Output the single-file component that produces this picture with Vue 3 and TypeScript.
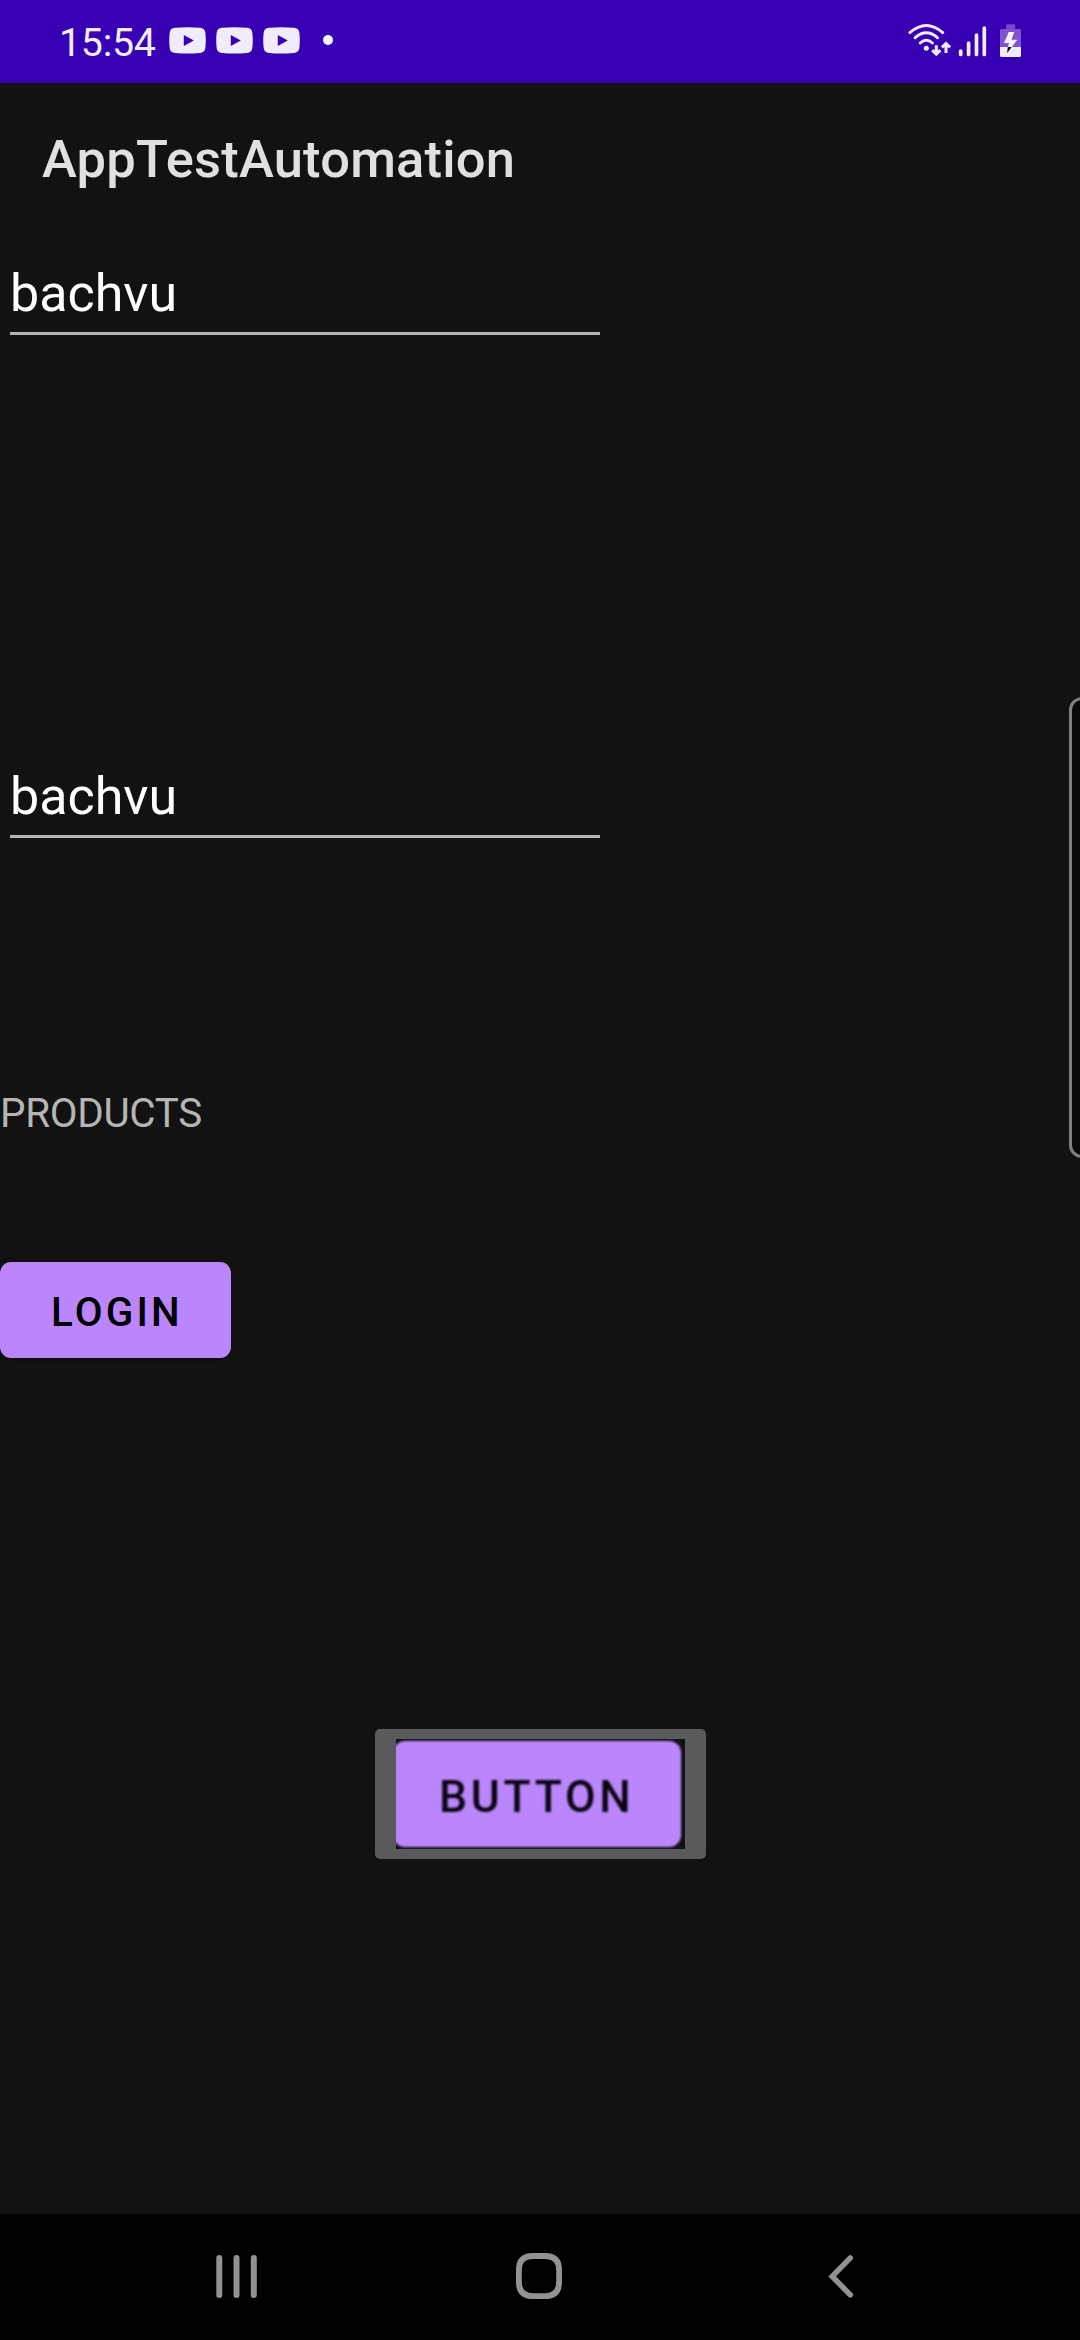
<script setup lang="ts">
import { ref } from 'vue'

const username = ref<string>('bachvu')
const password = ref<string>('bachvu')
const notifications: number[] = [1, 2, 3]
</script>

<template>
  <div class="screen">
    <header class="status">
      <span class="clock">15:54</span>
      <svg v-for="n in notifications" :key="n" class="video" viewBox="0 0 37 27">
        <path
          fill-rule="evenodd"
          d="M6 .7Q18.500 -.4 31 .7Q35.600 1 36.300 5.500Q37.300 13.300 36.300 21.300Q35.600 25.600 31 26Q18.500 27.200 6 26Q1.400 25.600 .7 21.300Q-.3 13.300 .7 5.500Q1.400 1 6 .7ZM14.800 7.900V18.900L24.800 13.400Z"
        />
      </svg>
      <span class="dot"></span>
      <svg class="system" viewBox="900 0 130 83">
        <g fill="none" stroke="#f1ecfb" stroke-width="2.900" stroke-linecap="round">
          <path d="M909.800 32.600Q926.300 18.300 942.800 32.600" />
          <path d="M915 37.800Q926.300 27.800 937.600 37.800" />
          <path d="M920.200 43Q926.300 37.400 932.400 43" />
        </g>
        <circle cx="926.300" cy="48.300" r="2.500" fill="#f1ecfb" />
        <g fill="none" stroke="#f1ecfb" stroke-width="3">
          <path d="M936.300 45.300V54M932.200 50.200L936.300 54.100L940.400 50.200" />
          <path d="M946 53V44M941.900 47.400L946 43.500L950.100 47.400" />
        </g>
        <g stroke="#f1ecfb" stroke-width="3.700" stroke-linecap="round">
          <path d="M960.700 51V54.500M968.600 43.200V54.500M976.500 35.200V54.500M984.300 28.200V54.500" />
        </g>
        <path d="M1006 25.500Q1006 24.300 1007.200 24.300H1014Q1015.200 24.300 1015.200 25.500V29H1006Z" fill="#7848cd" />
        <path d="M1000 30.500Q1000 29 1001.500 29H1019.500Q1021 29 1021 30.500V47H1000Z" fill="#7f52d0" />
        <path d="M1000 47H1021V55.500Q1021 57 1019.500 57H1001.500Q1000 57 1000 55.500Z" fill="#f1ecfb" />
        <path d="M1008.800 32H1014.300L1011.500 39.700H1017.300L1011.800 47H1008L1009 43H1004Z" fill="#f8f5ff" />
        <path d="M1007.800 47H1011.800L1007 53.200Z" fill="#111" />
      </svg>
    </header>

    <main class="content">
      <h1 class="title">AppTestAutomation</h1>
      <input v-model="username" class="field" type="text" spellcheck="false" />
      <input v-model="password" class="field second" type="text" spellcheck="false" />
      <p class="products">PRODUCTS</p>
      <button class="login" type="button">LOGIN</button>
      <button class="image-button" type="button">
        <span class="picture"><span class="face">BUTTON</span></span>
      </button>
    </main>

    <nav class="navigation">
      <svg viewBox="0 0 60 60">
        <path d="M12.300 11V48M29.500 11V48M46.800 11V48" stroke-width="6" stroke-linecap="round" />
      </svg>
      <svg viewBox="0 0 60 60">
        <path
          d="M24 9H36Q50.100 9 50.100 23V35Q50.100 49.200 36 49.200H24Q9.900 49.200 9.900 35V23Q9.900 9 24 9Z"
          stroke-width="5.800"
        />
      </svg>
      <svg viewBox="0 0 60 60">
        <path d="M40.300 10.900L22.200 29.400L40.300 47.900" stroke-width="5.500" stroke-linecap="round" />
      </svg>
    </nav>

    <div class="edge-panel"></div>
  </div>
</template>

<style>
body {
  margin: 0;
  background: #121212;
}
</style>

<style scoped>
.screen {
  position: relative;
  display: flex;
  flex-direction: column;
  box-sizing: border-box;
  width: 1080px;
  height: 2340px;
  overflow: hidden;
  background: #121212;
  font-family: Roboto, sans-serif;
}

.status {
  display: flex;
  align-items: center;
  box-sizing: border-box;
  height: 83px;
  padding-left: 59px;
  background: #3700b3;
  color: #f1ecfb;
}

.clock {
  width: 110px;
  padding-top: 2px;
  font-size: 39.400px;
  line-height: 46px;
  letter-spacing: -0.3px;
}

.video {
  width: 37px;
  height: 27px;
  margin: 0 10px 2px 0;
  fill: #f1ecfb;
}

.dot {
  width: 10px;
  height: 10px;
  margin: 0 0 3px 13px;
  border-radius: 50%;
  background: #f8f5ff;
}

.system {
  width: 130px;
  height: 83px;
  margin: 0 50px 0 auto;
}

.content {
  display: flex;
  flex: 1;
  flex-direction: column;
  align-items: flex-start;
}

.title {
  margin: 0;
  padding: 46px 0 0 42px;
  color: #e0e0e0;
  font-size: 52.500px;
  font-weight: 500;
  line-height: 60px;
  letter-spacing: 0.2px;
}

.field {
  box-sizing: border-box;
  width: 590px;
  height: 78px;
  margin: 68px 0 0 10px;
  padding: 0 0 2px;
  border: 0;
  border-bottom: 3px solid #b3b3b3;
  border-radius: 0;
  outline: 0;
  background: transparent;
  color: #fff;
  font-family: inherit;
  font-size: 52px;
}

.second {
  margin-top: 425px;
}

.products {
  margin: 252px 0 0;
  color: #b5b5b5;
  font-size: 40.400px;
  line-height: 48px;
  letter-spacing: -0.3px;
}

.login {
  width: 231px;
  height: 96px;
  margin: 124px 0 0;
  padding: 5px 0 0 51px;
  border: 0;
  border-radius: 11px;
  background: #bb86fc;
  color: #000;
  font-family: inherit;
  font-size: 40.400px;
  font-weight: 500;
  letter-spacing: 3.200px;
  text-align: left;
  box-shadow: 0 2px 6px rgba(0, 0, 0, 0.3);
}

.image-button {
  display: flex;
  box-sizing: border-box;
  width: 331px;
  height: 130px;
  margin: 371px 0 0 375px;
  padding: 10px 21px;
  border: 0;
  border-radius: 5px;
  background: #5a5a5c;
}

.picture {
  display: flex;
  box-sizing: border-box;
  width: 289px;
  height: 110px;
  padding: 2px 4px 2px 0;
  overflow: hidden;
  background: #121212;
}

.face {
  flex: 1;
  margin-left: -3px;
  padding: 4px 0 0 46px;
  border-radius: 12px;
  background: #bb86fc;
  color: #0a0410;
  font-family: Roboto, sans-serif;
  font-size: 44.400px;
  font-weight: 500;
  line-height: 104px;
  letter-spacing: 3.750px;
  text-align: left;
  filter: blur(0.8px);
}

.navigation {
  display: flex;
  justify-content: space-between;
  align-items: center;
  box-sizing: border-box;
  height: 126px;
  padding: 0 210px 0 207px;
  background: #000;
}

.navigation svg {
  width: 60px;
  height: 60px;
  fill: none;
  stroke: #929292;
}

.edge-panel {
  position: absolute;
  top: 697px;
  right: -20px;
  box-sizing: border-box;
  width: 31px;
  height: 461px;
  border: 3px solid #808080;
  border-radius: 13px;
  background: #080808;
}
</style>
